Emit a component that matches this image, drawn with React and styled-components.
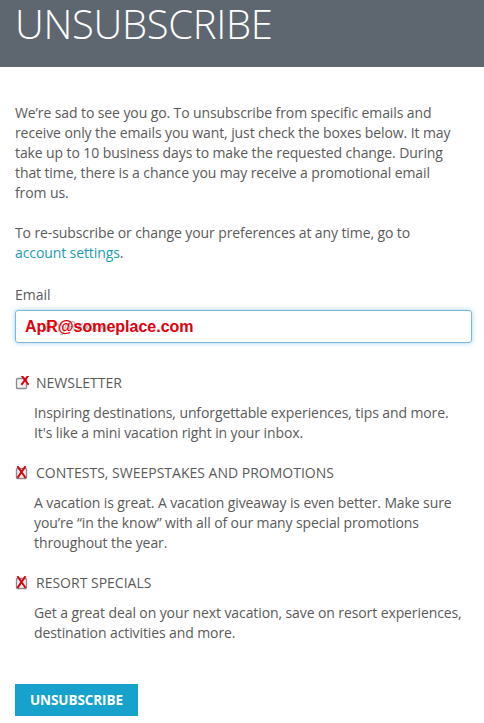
import styled, { createGlobalStyle } from 'styled-components';

const GlobalStyle = createGlobalStyle`
    body {
        margin: 0;
        background: #ffffff;
        font-family: "Open Sans", "DejaVu Sans", sans-serif;
        color: #5a5a5a;
    }
`;

const Page = styled.div`
    width: 484px;
    min-height: 723px;
    background: #ffffff;
`;

const Header = styled.header`
    height: 67px;
    background: #5e6770;
    box-sizing: border-box;
    padding: 0 0 0 15px;
`;

const Title = styled.h1`
    margin: 0;
    padding-top: 2px;
    font-weight: 300;
    font-size: 40px;
    line-height: 44px;
    color: #ffffff;
    letter-spacing: -0.3px;
`;

const Body = styled.main`
    padding: 36px 15px 0 15px;
    font-size: 14px;
    line-height: 20px;
`;

const Para = styled.p`
    margin: 0 0 ${p => p.gap || 20}px 0;
    letter-spacing: -0.1px;
`;

const Link = styled.a`
    color: #1b9bb4;
    text-decoration: none;
`;

const Label = styled.label`
    display: block;
    margin-bottom: 5px;
`;

const InputBox = styled.div`
    position: relative;
    height: 33px;
    width: 457px;
    box-sizing: border-box;
    border: 1px solid #7fb6d6;
    border-radius: 3px;
    box-shadow: 0 0 5px rgba(102, 175, 233, 0.6);
    margin-bottom: 30px;
`;

const Ghost = styled.span`
    position: absolute;
    left: 28px;
    top: 5px;
    color: #b5b5b5;
    font-size: 14px;
`;

const Typed = styled.span`
    position: absolute;
    left: 9px;
    top: 6px;
    color: #e0000b;
    font-family: "Liberation Sans", Arial, sans-serif;
    font-weight: bold;
    font-size: 16px;
    line-height: 20px;
`;

const Option = styled.section`
    margin-bottom: 20px;
`;

const OptionHead = styled.div`
    display: flex;
    align-items: center;
    gap: 7px;
    height: 20px;
    margin-bottom: 10px;
    text-transform: uppercase;
`;

const OptionText = styled.p`
    margin: 0 0 0 19px;
    letter-spacing: -0.1px;
`;

const Button = styled.button`
    margin-top: 21px;
    height: 32px;
    padding: 0 15px;
    background: #17a2cd;
    border: none;
    color: #ffffff;
    font-family: "Open Sans", sans-serif;
    font-weight: 700;
    font-size: 13.5px;
    letter-spacing: -0.1px;
`;

function Box({ variant }) {
    const xPath = variant === 'corner'
        ? 'M7 0 L13 8 M13 0 L7 8'
        : 'M3 1 L10 11 M10 1 L3 11';
    return (
        <svg width="14" height="14" viewBox="0 0 14 14">
            <rect x="1.5" y="2.5" width="10" height="10" fill="#f3f3f3" stroke="#8a8a8a" strokeWidth="1.3" rx="1" />
            <path d={xPath} stroke="#e0000b" strokeWidth="2" strokeLinecap="square" />
        </svg>
    );
}

const options = [
    {
        title: 'Newsletter',
        variant: 'corner',
        text: ['Inspiring destinations, unforgettable experiences, tips and more.', "It's like a mini vacation right in your inbox."],
    },
    {
        title: 'Contests, Sweepstakes and Promotions',
        variant: 'center',
        text: ['A vacation is great. A vacation giveaway is even better. Make sure', 'you’re “in the know” with all of our many special promotions', 'throughout the year.'],
    },
    {
        title: 'Resort Specials',
        variant: 'center',
        text: ['Get a great deal on your next vacation, save on resort experiences,', 'destination activities and more.'],
    },
];

function App() {
    return (
        <Page>
            <GlobalStyle />
            <Header>
                <Title>UNSUBSCRIBE</Title>
            </Header>
            <Body>
                <Para>
                    We’re sad to see you go. To unsubscribe from specific emails and<br />
                    receive only the emails you want, just check the boxes below. It may<br />
                    take up to 10 business days to make the requested change. During<br />
                    that time, there is a chance you may receive a promotional email<br />
                    from us.
                </Para>
                <Para gap={22}>
                    To re-subscribe or change your preferences at any time, go to<br />
                    <Link href="#">account settings</Link>.
                </Para>
                <Label>Email</Label>
                <InputBox>
                    <Ghost>anyRxxxx</Ghost>
                    <Typed>ApR@someplace.com</Typed>
                </InputBox>
                {options.map(o => (
                    <Option key={o.title}>
                        <OptionHead>
                            <Box variant={o.variant} />
                            <span>{o.title}</span>
                        </OptionHead>
                        <OptionText>
                            {o.text.map((line, i) => (
                                <span key={i}>{line}{i < o.text.length - 1 && <br />}</span>
                            ))}
                        </OptionText>
                    </Option>
                ))}
                <Button>UNSUBSCRIBE</Button>
            </Body>
        </Page>
    );
}

export default App;
